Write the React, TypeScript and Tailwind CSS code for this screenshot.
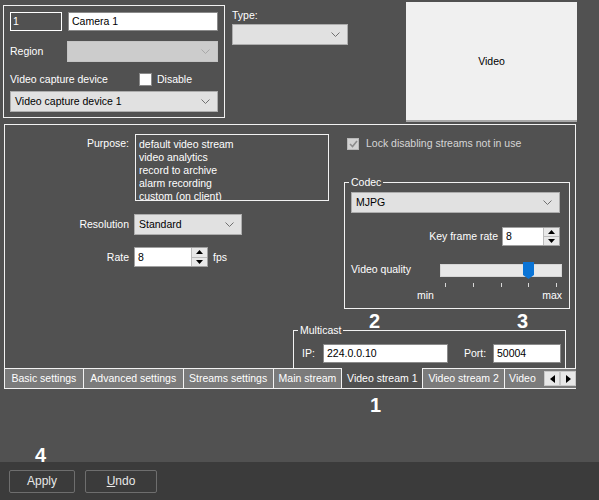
import React from 'react';

function Chevron({ color = '#606060' }: { color?: string }) {
  return (
    <svg width="9" height="5" viewBox="0 0 9 5" className="shrink-0">
      <path d="M0.5 0.5 L4.5 4.5 L8.5 0.5" fill="none" stroke={color} strokeWidth="1" />
    </svg>
  );
}

function Combo({ value = '', className = '', disabled = false }: { value?: string; className?: string; disabled?: boolean }) {
  return (
    <div
      className={`flex items-center justify-between pl-[4px] pr-[7px] border text-black ${
        disabled ? 'bg-[#cccccc] border-[#c4c4c4]' : 'bg-[#e1e1e1] border-[#adadad]'
      } ${className}`}
    >
      <span>{value}</span>
      <Chevron color={disabled ? '#a8a8a8' : '#707070'} />
    </div>
  );
}

function Spin({ value, className = '' }: { value: string; className?: string }) {
  return (
    <div className={`flex bg-white border border-[#a0a0a0] ${className}`}>
      <span className="flex-1 pl-[3px] self-center text-black">{value}</span>
      <div className="flex flex-col w-[16px] border-l border-[#bcbcbc]">
        <div className="flex-1 flex items-center justify-center bg-[#e8e8e8] border-b border-[#bcbcbc]">
          <svg width="7" height="4" viewBox="0 0 7 4">
            <path d="M0 4 L3.5 0 L7 4Z" fill="#000" />
          </svg>
        </div>
        <div className="flex-1 flex items-center justify-center bg-[#e8e8e8]">
          <svg width="7" height="4" viewBox="0 0 7 4">
            <path d="M0 0 L3.5 4 L7 0Z" fill="#000" />
          </svg>
        </div>
      </div>
    </div>
  );
}

function Legend({ text }: { text: string }) {
  return <span className="absolute -top-[7px] left-[4px] bg-[#515151] px-[2px] leading-[13px]">{text}</span>;
}

function Slider() {
  const ticks = [5, 33, 61, 88, 116];
  return (
    <svg width="122" height="26" viewBox="0 0 122 26">
      <rect x="0.5" y="2.5" width="121" height="12" fill="#e7e7e7" stroke="#d6d6d6" />
      <path d="M83 0 H94 V13 L88.5 17 L83 13Z" fill="#0a74d6" />
      {ticks.map((x) => (
        <rect key={x} x={x} y="21" width="1" height="4" fill="#d8d8d8" />
      ))}
    </svg>
  );
}

const TABS = [
  { label: 'Basic settings', w: 'w-[78px]' },
  { label: 'Advanced settings', w: 'w-[100px]' },
  { label: 'Streams settings', w: 'w-[90px]' },
  { label: 'Main stream', w: 'w-[69px]' },
  { label: 'Video stream 1', w: 'w-[81px]', selected: true },
  { label: 'Video stream 2', w: 'w-[82px]' },
  { label: 'Video', w: 'w-[39px]', clip: true },
];

export default function App() {
  return (
    <div className="relative w-[599px] h-[500px] overflow-hidden bg-[#515151] text-white text-[10.5px] leading-[13px] font-['Liberation_Sans',Arial,sans-serif] flex flex-col">
      {/* top area */}
      <div className="flex items-start h-[124px] shrink-0">
        {/* camera group */}
        <div className="ml-[3px] mt-[5px] w-[222px] h-[113px] border border-[#f2f2f2] px-[6px] pt-[6px] flex flex-col">
          <div className="flex h-[19px] gap-[6px]">
            <div className="w-[52px] border border-white pl-[2px] flex items-center">1</div>
            <div className="flex-1 bg-white border border-[#8a8a8a] pl-[3px] flex items-center text-black">Camera 1</div>
          </div>
          <div className="flex items-center mt-[10px] h-[21px]">
            <span className="w-[57px]">Region</span>
            <Combo disabled className="flex-1 h-[21px]" />
          </div>
          <div className="flex items-center mt-[10px] h-[14px]">
            <span className="w-[129px]">Video capture device</span>
            <span className="w-[13px] h-[13px] bg-white border border-[#8a8a8a]" />
            <span className="ml-[5px]">Disable</span>
          </div>
          <Combo value="Video capture device 1" className="mt-[5px] h-[21px]" />
        </div>

        {/* type */}
        <div className="ml-[7px] mt-[9px] flex flex-col">
          <span>Type:</span>
          <Combo className="mt-[2px] w-[116px] h-[21px]" />
        </div>

        {/* video preview */}
        <div className="ml-auto mr-[22px] mt-[2px] w-[171px] h-[120px] bg-[#f0f0f0] border-b-2 border-[#a9a9a9] flex items-center justify-center text-black">
          Video
        </div>
      </div>

      {/* main panel */}
      <div className="ml-[4px] w-[572px] h-[244px] shrink-0 border-t border-l border-r border-[#f2f2f2] flex flex-col">
        <div className="flex">
          {/* left column */}
          <div className="w-[338px] flex flex-col">
            <div className="flex mt-[9px]">
              <span className="w-[124px] text-right pt-[3px]">Purpose:</span>
              <div className="ml-[6px] w-[194px] h-[67px] border border-[#f2f2f2] pl-[3px] pt-[3px] overflow-hidden">
                <div>default video stream</div>
                <div>video analytics</div>
                <div>record to archive</div>
                <div>alarm recording</div>
                <div>custom (on client)</div>
              </div>
            </div>
            <div className="flex items-center mt-[13px]">
              <span className="w-[124px] text-right">Resolution</span>
              <Combo value="Standard" className="ml-[5px] w-[108px] h-[21px]" />
            </div>
            <div className="flex items-center mt-[12px]">
              <span className="w-[124px] text-right">Rate</span>
              <Spin value="8" className="ml-[5px] w-[74px] h-[20px]" />
              <span className="ml-[5px]">fps</span>
            </div>
          </div>

          {/* right column */}
          <div className="flex flex-col">
            <div className="flex items-center mt-[12px] ml-[4px]">
              <span className="w-[12px] h-[12px] bg-[#d2d2d2] border border-[#b8b8b8] flex items-center justify-center">
                <svg width="9" height="8" viewBox="0 0 9 8">
                  <path d="M1 4 L3.5 6.5 L8 1" fill="none" stroke="#8c8c8c" strokeWidth="1.6" />
                </svg>
              </span>
              <span className="ml-[7px] text-[#d6d6d6]">Lock disabling streams not in use</span>
            </div>

            <div className="relative ml-[1px] mt-[32px] w-[226px] h-[127px] border border-[#f2f2f2] px-[6px] pt-[9px] flex flex-col">
              <Legend text="Codec" />
              <Combo value="MJPG" className="w-[209px] h-[21px]" />
              <div className="flex items-center justify-end mt-[14px] pr-[3px]">
                <span className="mr-[4px]">Key frame rate</span>
                <Spin value="8" className="w-[58px] h-[19px]" />
              </div>
              <div className="flex mt-[16px]">
                <span className="w-[89px] pt-[1px]">Video quality</span>
                <Slider />
              </div>
              <div className="flex justify-between mt-[1px] pl-[66px] pr-[1px]">
                <span>min</span>
                <span>max</span>
              </div>
            </div>
          </div>
        </div>

        {/* multicast */}
        <div className="relative ml-[288px] mt-[21px] w-[273px] flex-1 border-t border-l border-r border-[#f2f2f2] flex items-start pl-[8px] pt-[13px]">
          <Legend text="Multicast" />
          <span className="w-[21px] h-[19px] flex items-center">IP:</span>
          <div className="w-[125px] h-[19px] bg-white border border-[#8a8a8a] pl-[3px] flex items-center text-black">224.0.0.10</div>
          <span className="ml-[16px] w-[29px] h-[19px] flex items-center">Port:</span>
          <div className="w-[68px] h-[19px] bg-white border border-[#8a8a8a] pl-[3px] flex items-center text-black">50004</div>
        </div>
      </div>

      {/* tabs */}
      <div className="ml-[4px] w-[572px] h-[21px] shrink-0 flex border-b border-l border-[#f2f2f2]">
        {TABS.map((t, i) => (
          <div
            key={t.label}
            className={`${t.w} h-full flex items-center overflow-hidden whitespace-nowrap ${
              i > 0 ? 'border-l border-[#f2f2f2]' : ''
            } ${t.selected ? 'bg-[#515151] justify-center' : 'bg-[#7b7b7b] border-t border-[#f2f2f2]'} ${
              t.clip ? 'pl-[4px]' : t.selected ? '' : 'justify-center'
            }`}
          >
            {t.label}
          </div>
        ))}
        <div className="flex-1 h-full border-t border-[#f2f2f2] bg-[#7b7b7b] flex items-center pl-[1px] gap-0">
          {['M5 0 L0 4 L5 8Z', 'M0 0 L5 4 L0 8Z'].map((d) => (
            <div key={d} className="w-[16px] h-[15px] bg-[#e8e8e8] border border-[#c8c8c8] flex items-center justify-center">
              <svg width="5" height="8" viewBox="0 0 5 8">
                <path d={d} fill="#000" />
              </svg>
            </div>
          ))}
        </div>
      </div>

      <div className="flex-1" />

      {/* bottom bar */}
      <div className="h-[38px] shrink-0 bg-[#3b3b3b] flex items-start pt-[8px] pl-[9px] gap-[10px] text-[#e8e8e8] text-[12px]">
        <div className="w-[66px] h-[23px] border border-[#6e6e6e] rounded-[2px] flex items-center justify-center">Apply</div>
        <div className="w-[72px] h-[23px] border border-[#6e6e6e] rounded-[2px] flex items-center justify-center">
          <span>
            <span className="underline">U</span>ndo
          </span>
        </div>
      </div>

      {/* annotation numbers */}
      <span className="absolute left-[369px] top-[311px] text-[20px] leading-[20px] font-bold">2</span>
      <span className="absolute left-[517px] top-[311px] text-[20px] leading-[20px] font-bold">3</span>
      <span className="absolute left-[370px] top-[395px] text-[20px] leading-[20px] font-bold">1</span>
      <span className="absolute left-[35px] top-[445px] text-[20px] leading-[20px] font-bold">4</span>
    </div>
  );
}
